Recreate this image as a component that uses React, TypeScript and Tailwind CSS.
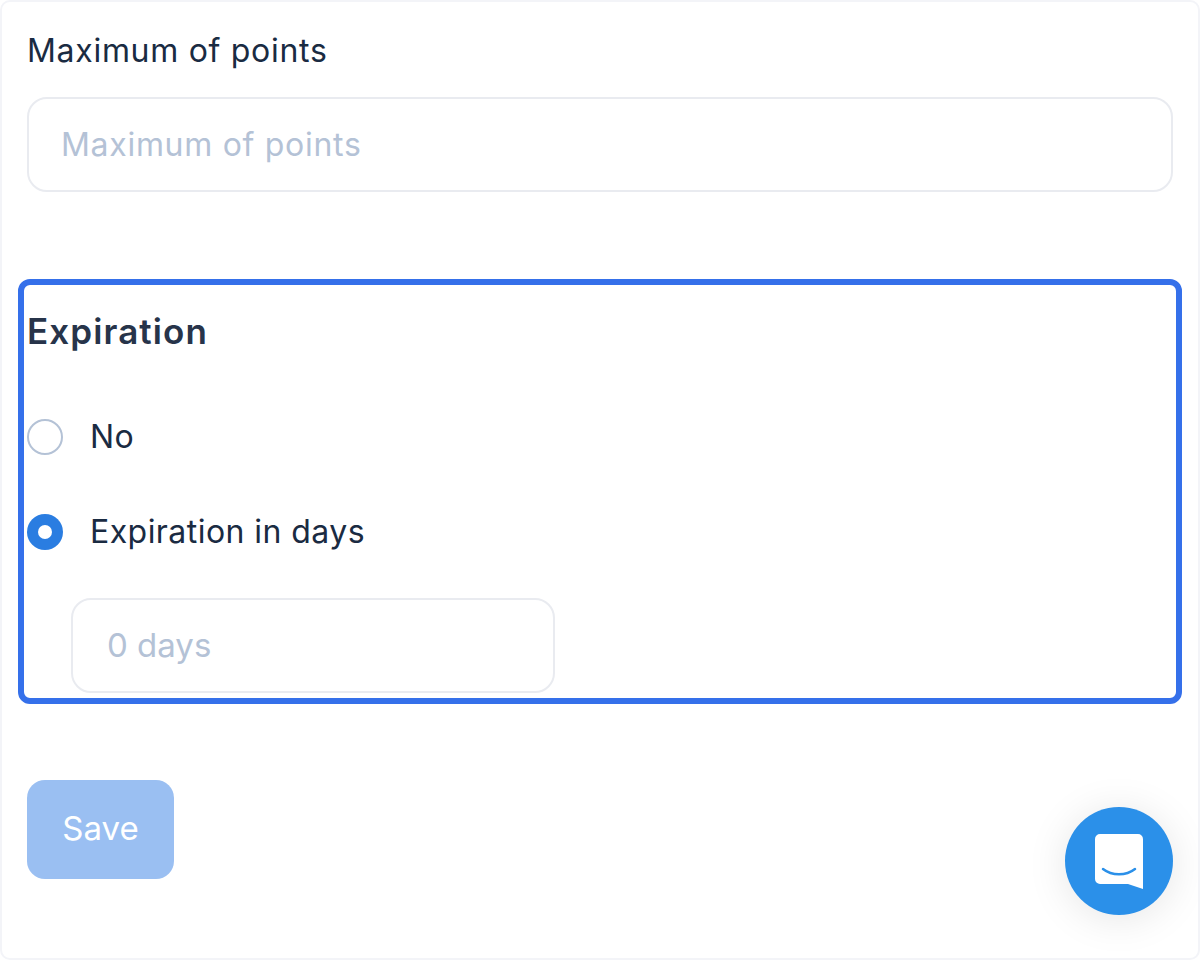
const fontStack = "font-['Inter','Noto_Sans',sans-serif]";

function ChatIcon() {
  return (
    <svg width="48" height="55" viewBox="0 0 48 55" fill="none">
      <path d="M5 0h38a5 5 0 0 1 5 5v50l-15-5H5a5 5 0 0 1-5-5V5a5 5 0 0 1 5-5z" fill="#ffffff" />
      <path d="M8 35c9 7 23 7 32 0" stroke="#2b90e9" strokeWidth="2.5" strokeLinecap="round" />
    </svg>
  );
}

export default function App() {
  return (
    <div className={`relative h-[960px] w-[1200px] overflow-hidden rounded-[10px] border-2 border-[#f3f4f8] bg-white px-[25px] ${fontStack}`}>
      <label className="mt-[29px] block text-[32px] leading-[40px] tracking-[0.7px] text-[#1a2b42]">
        Maximum of points
      </label>
      <div className="mt-[26px] flex h-[95px] items-center rounded-[20px] border-2 border-[#e9ebf0] px-[32px] text-[32px] tracking-[0.7px] text-[#b4c2d6]">
        Maximum of points
      </div>

      <section className="-mx-[9px] mt-[87px] h-[425px] rounded-[12px] border-[6px] border-[#3570ea] px-[3px]">
        <h2 className="mt-[22px] text-[35px] font-semibold leading-[48px] tracking-[1.1px] text-[#27344a]">Expiration</h2>

        <div className="mt-[64px] flex h-[36px] items-center gap-[27px]">
          <span className="h-[36px] w-[36px] rounded-full border-2 border-[#b4c2d6]" />
          <span className="text-[32px] tracking-[0.45px] text-[#1a2b42]">No</span>
        </div>

        <div className="mt-[59px] flex h-[36px] items-center gap-[27px]">
          <span className="grid h-[36px] w-[36px] place-items-center rounded-full bg-[#2a7de1]">
            <span className="h-[14px] w-[14px] rounded-full bg-white" />
          </span>
          <span className="text-[32px] tracking-[0.45px] text-[#1a2b42]">Expiration in days</span>
        </div>

        <div className="ml-[44px] mt-[48px] flex h-[95px] w-[484px] items-center rounded-[20px] border-2 border-[#e9ebf0] px-[34px] text-[33px] text-[#b4c2d6]">
          0 days
        </div>
      </section>

      <button
        type="button"
        className="mt-[76px] block h-[99px] w-[147px] rounded-[18px] bg-[#9abff2] pb-[2px] text-[33px] text-white"
      >
        Save
      </button>

      <div className="absolute left-[1063px] top-[805px] grid h-[108px] w-[108px] place-items-center rounded-full bg-[#2b90e9] shadow-[0_4px_40px_rgba(0,0,0,0.1)]">
        <ChatIcon />
      </div>
    </div>
  );
}
